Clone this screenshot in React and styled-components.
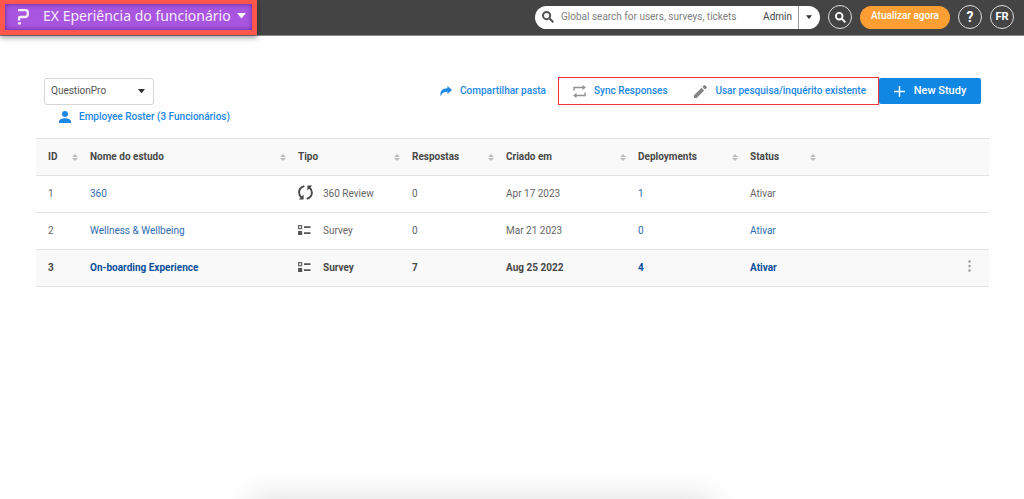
import React from "react";
import styled, { createGlobalStyle } from "styled-components";

const GlobalStyle = createGlobalStyle`
  * { box-sizing: border-box; }
  body {
    margin: 0;
    background: #fefefe;
    color: #545454;
    font: 10px/16px Roboto, "Noto Sans", sans-serif;
  }
  button, input, select { font: inherit; color: inherit; }
  button { cursor: pointer; }
  svg { display: block; flex: none; }
`;

const Page = styled.div`
  min-height: 100vh;
  position: relative;
  overflow: hidden;
`;

const TopBar = styled.header`
  display: flex;
  align-items: flex-start;
  justify-content: space-between;
  height: 36px;
  background: #444;
  border-bottom: 1px solid #8a8a8a;
`;

const ProductSwitch = styled.button`
  display: flex;
  align-items: center;
  height: 35px;
  width: 257px;
  padding: 0 6px 2px 12px;
  border: 5px solid #ff574d;
  border-top-width: 4px;
  background: #a855e0;
  box-shadow: 0 3px 5px rgba(0, 0, 0, 0.35), inset 0 0 5px rgba(70, 20, 120, 0.7);
  color: #f6eafd;
  font-family: "Noto Sans", sans-serif;
  font-size: 14px;
  line-height: 20px;
  text-align: left;
`;

const ProductName = styled.span`
  flex: 1;
  padding-left: 13px;
  white-space: nowrap;
`;

const Tools = styled.div`
  display: flex;
  align-items: center;
  gap: 8px;
  padding: 5px 10px 0 0;
`;

const SearchBox = styled.form`
  display: flex;
  align-items: center;
  width: 285px;
  height: 23px;
  padding-left: 7px;
  border-radius: 12px;
  background: #fff;
  overflow: hidden;
`;

const PlainButton = styled.button`
  display: flex;
  align-items: center;
  justify-content: center;
  padding: 0;
  border: 0;
  background: none;
`;

const SearchInput = styled.input`
  flex: 1;
  min-width: 0;
  padding: 0 0 0 7px;
  border: 0;
  outline: 0;
  background: none;
  &::placeholder { color: #808080; opacity: 1; }
`;

const Scope = styled.span`
  padding-right: 6px;
  color: #444;
`;

const ScopeToggle = styled(PlainButton)`
  width: 22px;
  height: 23px;
  padding-right: 1px;
  border-left: 1px solid #999;
`;

const RoundButton = styled(PlainButton)`
  width: 24px;
  height: 24px;
  border: 1px solid #ddd;
  border-radius: 50%;
  color: #fff;
  font-size: ${(p) => (p.$large ? "14px" : "11px")};
  font-weight: 700;
`;

const UpgradeButton = styled.button`
  height: 23px;
  width: 90px;
  padding: 0 0 2px;
  border: 0;
  border-radius: 12px;
  background: #ff9f33;
  color: #fff;
  font-weight: 500;
  white-space: nowrap;
`;

const Main = styled.main`
  padding: 41px 35px 0 36px;
`;

const Toolbar = styled.div`
  display: flex;
  align-items: center;
  justify-content: space-between;
  padding: 0 8px;
`;

const FolderField = styled.label`
  display: flex;
  align-items: center;
  position: relative;
  svg { position: absolute; right: 9px; pointer-events: none; }
`;

const FolderSelect = styled.select`
  appearance: none;
  width: 110px;
  height: 27px;
  padding: 0 20px 0 6px;
  border: 1px solid #d6d6d6;
  border-radius: 3px;
  background: #fff;
`;

const Actions = styled.div`
  display: flex;
  align-items: center;
`;

const ActionLink = styled.a`
  display: flex;
  align-items: center;
  gap: 8px;
  color: #1b87e6;
  font-weight: 500;
  text-decoration: none;
  white-space: nowrap;
`;

const Highlighted = styled.div`
  display: flex;
  align-items: center;
  justify-content: space-between;
  width: 321px;
  height: 28px;
  margin-left: 12px;
  padding: 0 12px 0 14px;
  border: 1px solid #f5333f;
`;

const NewStudyButton = styled.button`
  display: flex;
  align-items: center;
  justify-content: center;
  gap: 9px;
  width: 102px;
  height: 26px;
  padding: 0;
  border: 0;
  border-radius: 2px;
  background: #0f87e3;
  color: #fff;
  font-size: 11px;
  font-weight: 500;
  white-space: nowrap;
`;

const Roster = styled.div`
  display: flex;
  padding: 4px 0 13px 23px;
`;

const Studies = styled.table`
  width: 100%;
  table-layout: fixed;
  border-collapse: collapse;
  border-top: 1px solid #e4e4e4;
`;

const Column = styled.col`
  width: ${(p) => p.$width || "auto"};
`;

const Row = styled.tr`
  height: 37px;
  border-bottom: 1px solid #e4e4e4;
  background: ${(p) => (p.$shaded ? "#f9f9f9" : "transparent")};
  color: ${(p) => (p.$shaded ? "#484848" : "#666")};
  font-weight: ${(p) => (p.$shaded ? 700 : 400)};
`;

const HeadCell = styled.th`
  padding: 0 0 0 12px;
  text-align: left;
`;

const HeadContent = styled.div`
  display: flex;
  align-items: center;
  justify-content: space-between;
  white-space: nowrap;
`;

const Cell = styled.td`
  padding: 0 0 0 12px;
  white-space: nowrap;
`;

const CellLink = styled.a`
  color: ${(p) => (p.$strong ? "#0b4f9c" : "#2f6cae")};
  text-decoration: none;
`;

const Kind = styled.span`
  display: grid;
  grid-template-columns: 25px auto;
  align-items: center;
  justify-content: start;
`;

const RowMenu = styled(PlainButton)`
  width: 16px;
  height: 20px;
  margin: 0 12px 4px auto;
`;

const SheetShadow = styled.div`
  position: absolute;
  left: 25%;
  right: 31%;
  bottom: -24px;
  height: 20px;
  box-shadow: 0 0 28px 4px rgba(0, 0, 0, 0.14);
`;

const Caret = ({ width = 6, color = "#333" }) => (
  <svg width={width} height={width / 2 + 1} viewBox="0 0 8 5" fill={color} aria-hidden="true">
    <path d="M0 0h8L4 5z" />
  </svg>
);

const Logo = () => (
  <svg width="13" height="17" viewBox="0 0 13 17" fill="none" stroke="#f6eafd" strokeWidth="2.300" aria-hidden="true">
    <path d="M1 2.200h7.500c1.500 0 2.300.8 2.300 2.300v1.500c0 2-1 3-3 3H3c-.8 0-1 .4-1 1v2.500M1 15.400h3" />
  </svg>
);

const SearchIcon = ({ size = 11 }) => (
  <svg width={size} height={size} viewBox="0 0 12 12" fill="none" stroke="currentColor" strokeWidth="2" aria-hidden="true">
    <circle cx="4.600" cy="4.600" r="3.600" />
    <path d="M7.300 7.300l4 4" />
  </svg>
);

const ShareIcon = () => (
  <svg width="12" height="11" viewBox="0 0 12 11" fill="#1b87e6" aria-hidden="true">
    <path d="M7.500 0L12 4 7.500 8V5.700C4.200 5.600 2 6.400.6 10.600-.3 5.400 2 2.400 7.500 2.300z" />
  </svg>
);

const SyncIcon = () => (
  <svg width="13" height="13" viewBox="0 0 13 13" aria-hidden="true">
    <path d="M1 5.500V2.500h9M12 7.500v3H3" fill="none" stroke="#929292" strokeWidth="1.400" />
    <path d="M9.500 0L13 2.500 9.500 5zM3.500 8L0 10.500 3.500 13z" fill="#929292" />
  </svg>
);

const PencilIcon = () => (
  <svg width="13" height="13" viewBox="0 0 13 13" fill="#858585" aria-hidden="true">
    <path d="M0 10.300V13h2.700l7.500-7.500-2.700-2.700zM12.700 3.100a1 1 0 000-1.200L11.100.3a1 1 0 00-1.200 0L8.400 1.900l2.700 2.700z" />
  </svg>
);

const PlusIcon = () => (
  <svg width="11" height="11" viewBox="0 0 11 11" stroke="#fff" strokeWidth="1.400" aria-hidden="true">
    <path d="M5.500 0v11M0 5.500h11" />
  </svg>
);

const PersonIcon = () => (
  <svg width="12" height="12" viewBox="0 0 12 12" fill="#1b87e6" aria-hidden="true">
    <circle cx="6" cy="3" r="3" />
    <path d="M0 12v-1.500C0 8 3.500 7.200 6 7.200s6 .8 6 3.300V12z" />
  </svg>
);

const SortIcon = () => (
  <svg width="6" height="7" viewBox="0 0 6 7" fill="#bdbdbd" aria-hidden="true">
    <path d="M0 3l3-3 3 3zM0 4h6L3 7z" />
  </svg>
);

const CycleIcon = () => (
  <svg width="15" height="19" viewBox="0 0 15 19" aria-hidden="true">
    <path d="M6.300 1.200C3 2 1.100 4.500 1.100 7.500c0 2 .9 3.900 2.500 5.100M8.700 13.800c3.300-.8 5.200-3.200 5.200-6.200 0-2-.9-4-2.500-5.200" fill="none" stroke="#484848" strokeWidth="1.900" />
    <path d="M5.600 9.500v5.100H.8zM9.400 5.500V.4h4.800z" fill="#484848" />
  </svg>
);

const ListIcon = () => (
  <svg width="13" height="12" viewBox="0 0 13 12" fill="#555" aria-hidden="true">
    <path d="M.6.600h3v3h-3z" fill="none" stroke="#666" strokeWidth="1.200" />
    <path d="M0 6h4.200v4H0zM6 1.200h6.500v1.900H6zM6 7.200h6.500v1.900H6z" />
  </svg>
);

const DotsIcon = () => (
  <svg width="3" height="12" viewBox="0 0 3 12" fill="#9a9a9a" aria-hidden="true">
    <circle cx="1.500" cy="1.500" r="1.200" />
    <circle cx="1.500" cy="6" r="1.200" />
    <circle cx="1.500" cy="10.500" r="1.200" />
  </svg>
);

const columns = [
  { title: "ID", width: "42px" },
  { title: "Nome do estudo", width: "208px" },
  { title: "Tipo", width: "114px" },
  { title: "Respostas", width: "94px" },
  { title: "Criado em", width: "132px" },
  { title: "Deployments", width: "112px" },
  { title: "Status", width: "78px" },
];

const studies = [
  { id: 1, name: "360", kind: "360 Review", answers: 0, created: "Apr 17 2023", deployments: 1, plainStatus: true },
  { id: 2, name: "Wellness & Wellbeing", kind: "Survey", answers: 0, created: "Mar 21 2023", deployments: 0 },
  { id: 3, name: "On-boarding Experience", kind: "Survey", answers: 7, created: "Aug 25 2022", deployments: 4, active: true },
];

export default function App() {
  return (
    <Page>
      <GlobalStyle />
      <TopBar>
        <ProductSwitch type="button">
          <Logo />
          <ProductName>EX Eperiência do funcionário</ProductName>
          <Caret width={9} color="#fff" />
        </ProductSwitch>
        <Tools>
          <SearchBox role="search" onSubmit={(e) => e.preventDefault()}>
            <SearchIcon size={12} />
            <SearchInput aria-label="Global search" placeholder="Global search for users, surveys, tickets" />
            <Scope>Admin</Scope>
            <ScopeToggle type="button" aria-label="Search scope">
              <Caret />
            </ScopeToggle>
          </SearchBox>
          <RoundButton type="button" aria-label="Search">
            <SearchIcon />
          </RoundButton>
          <UpgradeButton type="button">Atualizar agora</UpgradeButton>
          <RoundButton type="button" $large>?</RoundButton>
          <RoundButton type="button">FR</RoundButton>
        </Tools>
      </TopBar>
      <Main>
        <Toolbar>
          <FolderField>
            <FolderSelect aria-label="Folder">
              <option>QuestionPro</option>
            </FolderSelect>
            <Caret width={7} />
          </FolderField>
          <Actions>
            <ActionLink href="#share">
              <ShareIcon />
              Compartilhar pasta
            </ActionLink>
            <Highlighted>
              <ActionLink href="#sync">
                <SyncIcon />
                Sync Responses
              </ActionLink>
              <ActionLink href="#existing">
                <PencilIcon />
                Usar pesquisa/inquérito existente
              </ActionLink>
            </Highlighted>
            <NewStudyButton type="button">
              <PlusIcon />
              New Study
            </NewStudyButton>
          </Actions>
        </Toolbar>
        <Roster>
          <ActionLink href="#roster">
            <PersonIcon />
            Employee Roster (3 Funcionários)
          </ActionLink>
        </Roster>
        <Studies>
          <colgroup>
            {columns.map((c) => <Column key={c.title} $width={c.width} />)}
            <Column />
          </colgroup>
          <thead>
            <Row $shaded>
              {columns.map((c) => (
                <HeadCell key={c.title} scope="col">
                  <HeadContent>
                    {c.title}
                    <SortIcon />
                  </HeadContent>
                </HeadCell>
              ))}
              <HeadCell as="td" />
            </Row>
          </thead>
          <tbody>
            {studies.map((s) => (
              <Row key={s.id} $shaded={s.active}>
                <Cell>{s.id}</Cell>
                <Cell><CellLink href="#study" $strong={s.active}>{s.name}</CellLink></Cell>
                <Cell>
                  <Kind>
                    {s.kind === "Survey" ? <ListIcon /> : <CycleIcon />}
                    {s.kind}
                  </Kind>
                </Cell>
                <Cell>{s.answers}</Cell>
                <Cell>{s.created}</Cell>
                <Cell><CellLink href="#deployments" $strong={s.active}>{s.deployments}</CellLink></Cell>
                <Cell>
                  {s.plainStatus ? "Ativar" : <CellLink href="#status" $strong={s.active}>Ativar</CellLink>}
                </Cell>
                <Cell>
                  {s.active && <RowMenu type="button" aria-label="More options"><DotsIcon /></RowMenu>}
                </Cell>
              </Row>
            ))}
          </tbody>
        </Studies>
      </Main>
      <SheetShadow />
    </Page>
  );
}
